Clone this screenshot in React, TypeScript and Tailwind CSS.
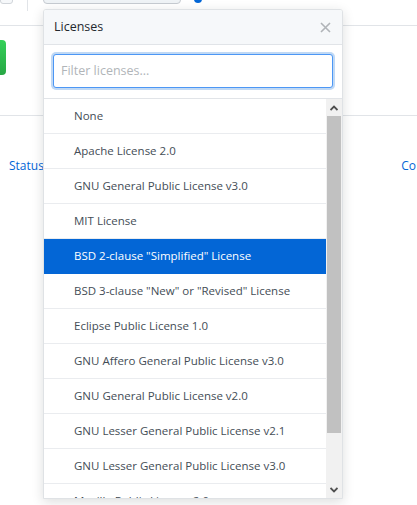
import React from "react";

const licenses = [
  "None",
  "Apache License 2.0",
  "GNU General Public License v3.0",
  "MIT License",
  'BSD 2-clause "Simplified" License',
  'BSD 3-clause "New" or "Revised" License',
  "Eclipse Public License 1.0",
  "GNU Affero General Public License v3.0",
  "GNU General Public License v2.0",
  "GNU Lesser General Public License v2.1",
  "GNU Lesser General Public License v3.0",
  "Mozilla Public License 2.0",
];

export default function App() {
  return (
    <div
      className="relative w-[417px] h-[505px] overflow-hidden bg-white text-[11.5px]"
      style={{ fontFamily: '"Open Sans", "Noto Sans", sans-serif' }}
    >
      {/* background page */}
      <div className="flex h-[26px] items-start border-b border-[#e1e4e8]">
        <div className="-mt-[20px] h-[24px] w-[13px] rounded-[3px] border border-[#d1d5da] bg-[#f6f8fa]" />
        <div className="ml-[14px] h-[11px] w-px bg-[#e1e4e8]" />
        <div className="-mt-[20px] ml-[15px] h-[24px] w-[138px] rounded-[4px] border border-[#c6cbd1] bg-[#eff3f6]" />
        <div className="-mt-[5px] ml-[13px] h-[8px] w-[8px] rounded-full bg-[#0366d6]" />
      </div>
      <div className="h-[90px] border-b border-[#e1e4e8] pt-[14px]">
        <div className="-ml-[50px] h-[35px] w-[56px] rounded-[4px] bg-gradient-to-b from-[#34d058] to-[#28a745]" />
      </div>
      <div className="flex justify-between pl-[9px] pr-[1px] pt-[41px] text-[12px] text-[#0366d6]">
        <span>Status</span>
        <span>Co</span>
      </div>

      {/* modal */}
      <div className="absolute left-[43px] top-[9px] flex h-[490px] w-[300px] flex-col overflow-hidden rounded-t-[3px] border border-[#dfe2e5] bg-white shadow-[0_3px_12px_rgba(27,31,35,0.15)]">
        <div className="flex h-[35px] shrink-0 items-center justify-between border-b border-[#e1e4e8] bg-[#f6f8fa] pl-[10px] pr-[10px] pt-[1px]">
          <span className="text-[12.5px] text-[#24292e]">Licenses</span>
          <svg width="11" height="11" viewBox="0 0 11 11" className="mr-[1px]">
            <path d="M1 1L10 10M10 1L1 10" stroke="#b0b4b8" strokeWidth="1.6" fill="none" />
          </svg>
        </div>
        <div className="shrink-0 border-b border-[#e1e4e8] px-[9px] pb-[10px] pt-[9px]">
          <div className="flex h-[34px] items-center rounded-[3px] border border-[#4c97f5] bg-white px-[7px] shadow-[0_0_0_2px_rgba(3,102,214,0.25)]">
            <span className="text-[12.5px] text-[#b1b5b9]">Filter licenses...</span>
          </div>
        </div>
        <div className="flex min-h-0 flex-1">
          <div className="min-w-0 flex-1 overflow-hidden">
            {licenses.map((l, i) => (
              <div
                key={l}
                className={
                  i === 4
                    ? "flex h-[35px] items-center border-b border-[#0366d6] bg-[#0366d6] pl-[30px] text-white"
                    : "flex h-[35px] items-center border-b border-[#eaecef] pl-[30px] text-[#444d56]"
                }
              >
                {l}
              </div>
            ))}
          </div>
          <div className="flex w-[16px] shrink-0 flex-col bg-[#f1f1f1]">
            <div className="flex h-[17px] items-center justify-center">
              <svg width="8" height="6" viewBox="0 0 8 6">
                <path d="M0.5 5L4 1.5L7.5 5" stroke="#505050" strokeWidth="1.8" fill="none" />
              </svg>
            </div>
            <div className="mx-[1px] h-[317px] bg-[#c1c1c1]" />
            <div className="flex-1" />
            <div className="flex h-[17px] items-center justify-center">
              <svg width="8" height="6" viewBox="0 0 8 6">
                <path d="M0.5 1L4 4.5L7.5 1" stroke="#505050" strokeWidth="1.8" fill="none" />
              </svg>
            </div>
          </div>
        </div>
      </div>
    </div>
  );
}
